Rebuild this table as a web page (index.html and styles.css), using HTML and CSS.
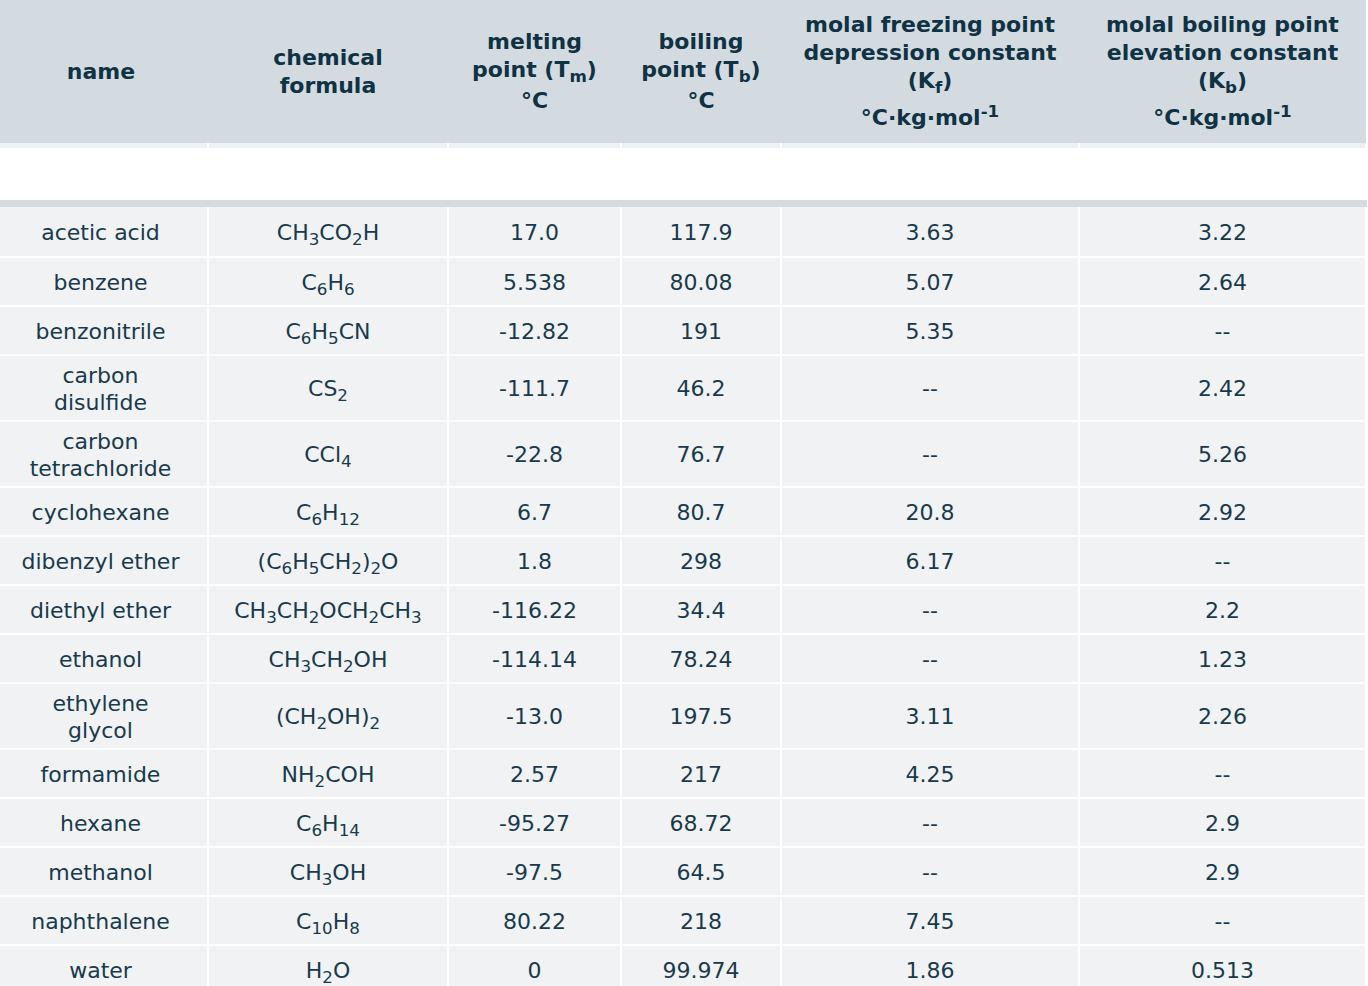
FILE: index.html
```html
<!DOCTYPE html>
<html lang="en">
<head>
<meta charset="utf-8">
<title>Solvent constants</title>
<link rel="stylesheet" href="styles.css">
</head>
<body>
<table class="data-table">
  <colgroup>
    <col class="c1"><col class="c2"><col class="c3"><col class="c4"><col class="c5"><col class="c6">
  </colgroup>
  <thead>
    <tr class="head-row">
      <th class="first">name</th>
      <th>chemical<br>formula</th>
      <th>melting<br>point (T<sub>m</sub>)<br>°C</th>
      <th>boiling<br>point (T<sub>b</sub>)<br>°C</th>
      <th>molal freezing point<br>depression constant<br>(K<sub>f</sub>)<br>°C·kg·mol<sup>-1</sup></th>
      <th>molal boiling point<br>elevation constant<br>(K<sub>b</sub>)<br>°C·kg·mol<sup>-1</sup></th>
    </tr>
  </thead>
  <tbody class="blank">
    <tr class="strip"><td></td><td></td><td></td><td></td><td></td><td></td></tr>
    <tr class="gap"><td colspan="6"></td></tr>
  </tbody>
  <tbody class="rows">
    <tr><td class="first">acetic acid</td><td>CH<sub>3</sub>CO<sub>2</sub>H</td><td>17.0</td><td>117.9</td><td>3.63</td><td>3.22</td></tr>
    <tr><td class="first">benzene</td><td>C<sub>6</sub>H<sub>6</sub></td><td>5.538</td><td>80.08</td><td>5.07</td><td>2.64</td></tr>
    <tr><td class="first">benzonitrile</td><td>C<sub>6</sub>H<sub>5</sub>CN</td><td>-12.82</td><td>191</td><td>5.35</td><td>--</td></tr>
    <tr><td class="first">carbon<br>disulfide</td><td>CS<sub>2</sub></td><td>-111.7</td><td>46.2</td><td>--</td><td>2.42</td></tr>
    <tr><td class="first">carbon<br>tetrachloride</td><td>CCl<sub>4</sub></td><td>-22.8</td><td>76.7</td><td>--</td><td>5.26</td></tr>
    <tr><td class="first">cyclohexane</td><td>C<sub>6</sub>H<sub>12</sub></td><td>6.7</td><td>80.7</td><td>20.8</td><td>2.92</td></tr>
    <tr><td class="first">dibenzyl ether</td><td>(C<sub>6</sub>H<sub>5</sub>CH<sub>2</sub>)<sub>2</sub>O</td><td>1.8</td><td>298</td><td>6.17</td><td>--</td></tr>
    <tr><td class="first">diethyl ether</td><td>CH<sub>3</sub>CH<sub>2</sub>OCH<sub>2</sub>CH<sub>3</sub></td><td>-116.22</td><td>34.4</td><td>--</td><td>2.2</td></tr>
    <tr><td class="first">ethanol</td><td>CH<sub>3</sub>CH<sub>2</sub>OH</td><td>-114.14</td><td>78.24</td><td>--</td><td>1.23</td></tr>
    <tr><td class="first">ethylene<br>glycol</td><td>(CH<sub>2</sub>OH)<sub>2</sub></td><td>-13.0</td><td>197.5</td><td>3.11</td><td>2.26</td></tr>
    <tr><td class="first">formamide</td><td>NH<sub>2</sub>COH</td><td>2.57</td><td>217</td><td>4.25</td><td>--</td></tr>
    <tr><td class="first">hexane</td><td>C<sub>6</sub>H<sub>14</sub></td><td>-95.27</td><td>68.72</td><td>--</td><td>2.9</td></tr>
    <tr><td class="first">methanol</td><td>CH<sub>3</sub>OH</td><td>-97.5</td><td>64.5</td><td>--</td><td>2.9</td></tr>
    <tr><td class="first">naphthalene</td><td>C<sub>10</sub>H<sub>8</sub></td><td>80.22</td><td>218</td><td>7.45</td><td>--</td></tr>
    <tr><td class="first">water</td><td>H<sub>2</sub>O</td><td>0</td><td>99.974</td><td>1.86</td><td>0.513</td></tr>
  </tbody>
</table>
</body>
</html>
```

FILE: styles.css
```css
html, body {
  margin: 0;
  padding: 0;
  background: #ffffff;
}

.data-table {
  width: 1366px;
  table-layout: fixed;
  border-collapse: collapse;
  font-family: "DejaVu Sans", Verdana, sans-serif;
  font-size: 22px;
  line-height: 27px;
  color: #183a4c;
  text-align: center;
}

.c1 { width: 208px; }
.c2 { width: 240px; }
.c3 { width: 173px; }
.c4 { width: 160px; }
.c5 { width: 298px; }
.c6 { width: 287px; }

.data-table sub,
.data-table sup {
  font-size: 0.76em;
}

.head-row {
  height: 143px;
}

.head-row th {
  background: #d4dbe0;
  color: #0f3244;
  font-weight: bold;
  vertical-align: middle;
  padding: 0 6px;
  border: none;
  line-height: 28px;
}

.head-row th sub {
  line-height: 22px;
}

.head-row th sup {
  line-height: 26px;
}

.head-row th.first {
  padding-right: 12px;
}

.strip td {
  height: 5px;
  padding: 0;
  background: #eef1f3;
  border-left: 2px solid #ffffff;
  border-right: 2px solid #ffffff;
}

.strip td:first-child {
  border-left: none;
}

.gap td {
  height: 52px;
  padding: 0;
  background: #ffffff;
  border: none;
}

.rows tr {
  height: 49px;
}

.rows tr:first-child {
  height: 53px;
}

.rows td {
  background: #f0f2f4;
  padding: 6px 6px 4px;
  border: 2px solid #ffffff;
  vertical-align: middle;
}

.rows td sub {
  line-height: 0;
}

.rows td:first-child {
  border-left: none;
  padding-right: 12px;
}

.rows tr:first-child td {
  border-top: 7px solid #d4dbe0;
}
```
